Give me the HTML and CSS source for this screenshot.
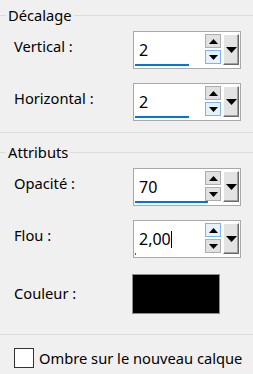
FILE: index.html
```html
<!DOCTYPE html>
<html lang="fr">
<head>
  <meta charset="UTF-8">
  <title>Ombre portée</title>
  <link rel="stylesheet" href="styles.css">
</head>
<body>
  <div class="panel">
    <div class="group-title"><span class="tick"></span><span class="title-text">Décalage</span><span class="rule"></span></div>

    <div class="row first">
      <label class="label">Vertical :</label>
      <div class="spin">
        <div class="spin-main">
          <span class="spin-value">2</span>
          <div class="spin-arrows">
            <span class="arrow"><svg width="9" height="5" viewBox="0 0 9 5"><path d="M0 5L4.5 0L9 5Z"/></svg></span>
            <span class="arrow hot"><svg width="9" height="5" viewBox="0 0 9 5"><path d="M0 0L9 0L4.5 5Z"/></svg></span>
          </div>
          <span class="drop"><svg width="11" height="6" viewBox="0 0 11 6"><path d="M0 0L11 0L5.5 6Z"/></svg></span>
        </div>
        <div class="spin-bar" style="width: 54px"></div>
      </div>
    </div>

    <div class="row">
      <label class="label">Horizontal :</label>
      <div class="spin">
        <div class="spin-main">
          <span class="spin-value">2</span>
          <div class="spin-arrows">
            <span class="arrow"><svg width="9" height="5" viewBox="0 0 9 5"><path d="M0 5L4.5 0L9 5Z"/></svg></span>
            <span class="arrow hot"><svg width="9" height="5" viewBox="0 0 9 5"><path d="M0 0L9 0L4.5 5Z"/></svg></span>
          </div>
          <span class="drop"><svg width="11" height="6" viewBox="0 0 11 6"><path d="M0 0L11 0L5.5 6Z"/></svg></span>
        </div>
        <div class="spin-bar" style="width: 54px"></div>
      </div>
    </div>

    <div class="sep"></div>

    <div class="group-title second"><span class="tick"></span><span class="title-text">Attributs</span><span class="rule"></span></div>

    <div class="row first">
      <label class="label">Opacité :</label>
      <div class="spin">
        <div class="spin-main">
          <span class="spin-value">70</span>
          <div class="spin-arrows">
            <span class="arrow"><svg width="9" height="5" viewBox="0 0 9 5"><path d="M0 5L4.5 0L9 5Z"/></svg></span>
            <span class="arrow"><svg width="9" height="5" viewBox="0 0 9 5"><path d="M0 0L9 0L4.5 5Z"/></svg></span>
          </div>
          <span class="drop"><svg width="11" height="6" viewBox="0 0 11 6"><path d="M0 0L11 0L5.5 6Z"/></svg></span>
        </div>
        <div class="spin-bar" style="width: 73px"></div>
      </div>
    </div>

    <div class="row">
      <label class="label">Flou :</label>
      <div class="spin">
        <div class="spin-main">
          <span class="spin-value">2,00<span class="caret"></span></span>
          <div class="spin-arrows">
            <span class="arrow hot"><svg width="9" height="5" viewBox="0 0 9 5"><path d="M0 5L4.5 0L9 5Z"/></svg></span>
            <span class="arrow"><svg width="9" height="5" viewBox="0 0 9 5"><path d="M0 0L9 0L4.5 5Z"/></svg></span>
          </div>
          <span class="drop"><svg width="11" height="6" viewBox="0 0 11 6"><path d="M0 0L11 0L5.5 6Z"/></svg></span>
        </div>
        <div class="spin-bar" style="width: 1px"></div>
      </div>
    </div>

    <div class="row color-row">
      <label class="label">Couleur :</label>
      <div class="swatch"></div>
    </div>

    <div class="sep bottom"></div>

    <label class="check-row">
      <span class="checkbox"></span>
      <span>Ombre sur le nouveau calque</span>
    </label>
  </div>
</body>
</html>
```

FILE: styles.css
```css
body {
  margin: 0;
  background: #f0f0f0;
  font-family: 'Noto Sans', 'Segoe UI', sans-serif;
  font-size: 14.7px;
  color: #000;
}
.panel {
  width: 253px;
  height: 374px;
  overflow: hidden;
}
.group-title {
  display: flex;
  align-items: center;
  height: 22px;
  margin-top: 4px;
}
.group-title.second {
  margin-top: 8px;
}
.tick {
  width: 6px;
  height: 1px;
  background: #dcdcdc;
}
.title-text {
  padding: 0 2px 0 2px;
  line-height: 22px;
}
.rule {
  flex: 1;
  height: 1px;
  background: #dcdcdc;
}
.row {
  display: flex;
  align-items: flex-start;
  margin-top: 14px;
}
.row.first {
  margin-top: 5px;
}
.label {
  width: 133px;
  flex: none;
  padding-left: 14px;
  box-sizing: border-box;
  line-height: 20px;
  padding-top: 5px;
}
.spin {
  width: 108px;
  height: 38px;
  box-sizing: border-box;
  border: 1px solid #a9a9a9;
  background: #fff;
  padding: 2px 1px;
  display: flex;
  flex-direction: column;
}
.spin-main {
  display: flex;
  height: 30px;
}
.spin-value {
  flex: 1;
  padding-left: 4px;
  display: flex;
  align-items: center;
  padding-top: 2px;
  font-size: 16px;
}
.caret {
  width: 1px;
  height: 17px;
  background: #000;
}
.spin-arrows {
  display: flex;
  flex-direction: column;
  gap: 2px;
  margin-right: 2px;
}
.arrow {
  width: 16px;
  height: 14px;
  box-sizing: border-box;
  border: 1px solid #adadad;
  background: #e1e1e1;
  display: flex;
  align-items: center;
  justify-content: center;
}
.arrow.hot {
  border-color: #7eb4ea;
  background: #e5f1fb;
}
.drop {
  width: 16px;
  height: 31px;
  box-sizing: border-box;
  background: #e3e3e3;
  border-top: 1px solid #fff;
  border-left: 1px solid #fff;
  border-right: 1px solid #696969;
  border-bottom: 1px solid #696969;
  box-shadow: inset -1px -1px 0 #a0a0a0;
  display: flex;
  align-items: center;
  justify-content: center;
}
.spin-bar {
  height: 2px;
  background: #0078d7;
}
.color-row {
  margin-top: 16px;
}
.color-row .label {
  padding-top: 9px;
}
.swatch {
  width: 88px;
  height: 40px;
  margin-left: -1px;
  box-sizing: border-box;
  border: 1px solid #8c8c8c;
  background: #000;
}
.sep {
  height: 1px;
  background: #dcdcdc;
  margin-top: 11px;
}
.sep.bottom {
  margin-top: 20px;
}
.check-row {
  display: flex;
  align-items: center;
  gap: 5px;
  margin-top: 13px;
  padding-left: 14px;
}
.checkbox {
  width: 20px;
  height: 20px;
  box-sizing: border-box;
  border: 1px solid #333;
  background: #fff;
}
```
